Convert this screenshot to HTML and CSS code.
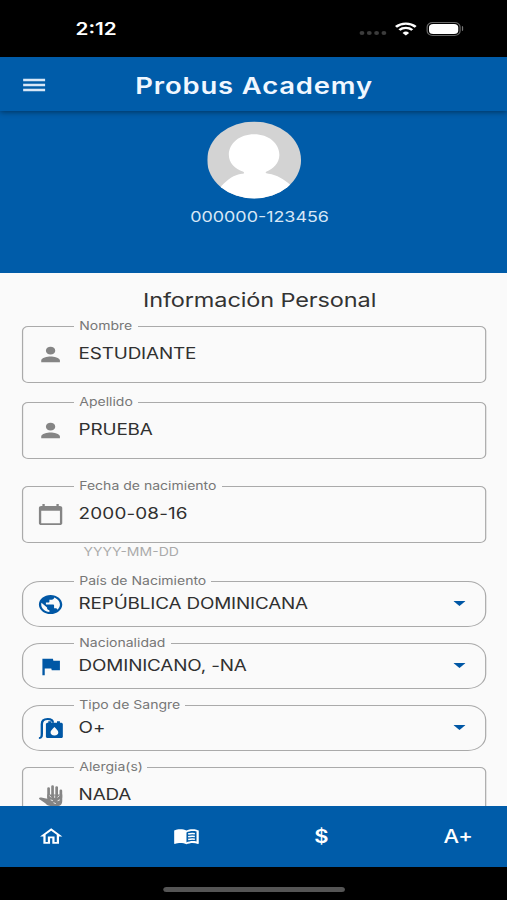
FILE: index.html
```html
<!DOCTYPE html>
<html lang="es">
<head>
<meta charset="utf-8">
<title>Probus Academy</title>
<link rel="stylesheet" href="styles.css">
</head>
<body>
<div class="screen">
  <header class="status">
    <span class="time">2:12</span>
    <span class="dots"><i></i><i></i><i></i><i></i></span>
    <svg class="wifi" viewBox="0 0 18 14"><path d="M9 13.6 6.3 10.9a3.9 3.9 0 0 1 5.4 0z" fill="#fff"/><path d="M3.7 8a7.6 7.6 0 0 1 10.6 0M.9 4.9a11.6 11.6 0 0 1 16.2 0" fill="none" stroke="#fff" stroke-width="2.3"/></svg>
    <span class="battery"><i></i></span><span class="tip"></span>
  </header>
  <div class="appbar">
    <svg class="menu" viewBox="0 0 18 12"><path d="M0-.2h18v2.500H0zM0 4.800h18v2.400H0zM0 9.700h18v2.500H0z" fill="currentColor"/></svg>
    <h1>Probus Academy</h1>
  </div>
  <section class="hero">
    <svg class="avatar" viewBox="0 0 78 78"><defs><clipPath id="round"><circle cx="39" cy="39" r="39"/></clipPath></defs><g clip-path="url(#round)"><path d="M0 0h78v78H0z" fill="#d3d3d3"/><path d="M39 13c12 0 21 9 21 21 0 8-5 14-11 17-1 1 0 2 2 2 7 1 13 6 18 11l5 15H6l6-14c5-6 10-11 17-12 2 0 2-1 1-2-7-3-12-9-12-17 0-12 9-21 21-21z" fill="#fff"/></g></svg>
    <p class="code">000000-123456</p>
  </section>
  <main>
    <h2>Información Personal</h2>
    <fieldset class="field">
      <legend>Nombre</legend>
      <div class="row"><svg class="icon" viewBox="0 0 24 24"><path d="M12 12c2.21 0 4-1.79 4-4s-1.79-4-4-4-4 1.79-4 4 1.79 4 4 4zm0 2c-2.67 0-8 1.34-8 4v2h16v-2c0-2.66-5.33-4-8-4z"/></svg><span class="value">ESTUDIANTE</span></div>
    </fieldset>
    <fieldset class="field second">
      <legend>Apellido</legend>
      <div class="row"><svg class="icon" viewBox="0 0 24 24"><path d="M12 12c2.21 0 4-1.79 4-4s-1.79-4-4-4-4 1.79-4 4 1.79 4 4 4zm0 2c-2.67 0-8 1.34-8 4v2h16v-2c0-2.66-5.33-4-8-4z"/></svg><span class="value">PRUEBA</span></div>
    </fieldset>
    <fieldset class="field date">
      <legend>Fecha de nacimiento</legend>
      <div class="row"><svg class="icon" viewBox="0 0 24 24"><path d="M20 3h-1V1h-2v2H7V1H5v2H4c-1.1 0-2 .9-2 2v16c0 1.1.9 2 2 2h16c1.1 0 2-.9 2-2V5c0-1.1-.9-2-2-2zm0 18H4V8h16v13z"/></svg><span class="value digits">2000-08-16</span></div>
    </fieldset>
    <p class="hint">YYYY-MM-DD</p>
    <fieldset class="field pill">
      <legend>País de Nacimiento</legend>
      <div class="row"><svg class="icon" viewBox="0 0 24 24"><path d="M12 2C6.48 2 2 6.48 2 12s4.48 10 10 10 10-4.48 10-10S17.52 2 12 2zm-1 17.93c-3.95-.49-7-3.85-7-7.93 0-.62.08-1.21.21-1.79L9 15v1c0 1.1.9 2 2 2v1.93zm6.9-2.54c-.26-.81-1-1.39-1.9-1.39h-1v-3c0-.55-.45-1-1-1H8v-2h2c.55 0 1-.45 1-1V7h2c1.1 0 2-.9 2-2v-.41c2.93 1.19 5 4.06 5 7.41 0 2.08-.8 3.97-2.1 5.39z"/></svg><span class="value">REPÚBLICA DOMINICANA</span><svg class="caret" viewBox="0 0 10 5"><path d="M0 0h10L5 5z"/></svg></div>
    </fieldset>
    <fieldset class="field pill">
      <legend>Nacionalidad</legend>
      <div class="row"><svg class="icon" viewBox="0 0 24 24"><path d="M14.4 6 14 4H5v17h2v-7h5.600l.4 2h7V6z"/></svg><span class="value">DOMINICANO, -NA</span><svg class="caret" viewBox="0 0 10 5"><path d="M0 0h10L5 5z"/></svg></div>
    </fieldset>
    <fieldset class="field pill">
      <legend>Tipo de Sangre</legend>
      <div class="row"><svg class="icon" viewBox="0 0 24 24"><path d="M2 22c2.500 0 2.500-2 2.500-5V7.500C4.500 4 6.500 2 9.500 2s4.500 1.500 4.500 4" fill="none" stroke="currentColor" stroke-width="2"/><path fill-rule="evenodd" d="M10 6V4.500h2.500V6h5V4.500H20V6h1.500l1 1v14l-1 1H9l-1-1V7l1-1zm5.300 4.500c-1.800 2.400-3.300 3.800-3.300 5.500a3.300 3.300 0 0 0 6.600 0c0-1.700-1.500-3.100-3.300-5.500z"/></svg><span class="value">O+</span><svg class="caret" viewBox="0 0 10 5"><path d="M0 0h10L5 5z"/></svg></div>
    </fieldset>
    <fieldset class="field last">
      <legend>Alergia(s)</legend>
      <div class="row"><svg class="icon" viewBox="0 0 24 24"><path d="M10.300 14V4.500M13.700 14V2.500M17.200 14V3.500M20.800 14V7" fill="none" stroke="currentColor" stroke-width="2.300" stroke-linecap="round"/><path d="M9.200 11H22v7c0 3-1.500 5-4 5h-5c-2.500 0-4-1-5.500-3l-5-4c-1-.9 0-2.200 1.500-1.900l5.200 1.400z"/><path d="m11 12 1.500 2m3-2v2.500m4-2.500-1.500 2m-6 2.500 2 1m4 0 2-1m-5.500 3 2 1" stroke="#fafafa" stroke-width=".8"/></svg><span class="value">NADA</span></div>
    </fieldset>
  </main>
  <nav>
    <a><svg viewBox="0 0 24 24"><path d="m12 5.690 5 4.500V18h-2v-6H9v6H7v-7.810zM12 3 2 12h3v8h6v-6h2v6h6v-8h3z"/></svg></a>
    <a><svg viewBox="0 0 24 24"><path fill-rule="evenodd" d="M21 4.500c-1.110-.35-2.330-.5-3.500-.5-1.950 0-4.050.4-5.500 1.500C10.550 4.400 8.450 4 6.500 4S2.450 4.400 1 5.500v14.150c0 .25.25.5.5.5C3.100 19.450 5.050 19 6.500 19c1.950 0 4.050.4 5.500 1.500 1.350-.85 3.800-1.500 5.500-1.500 1.650 0 3.350.3 4.750 1.050.4.050.75-.15.75-.4V5.500c-.6-.45-1.250-.75-2-1zm0 13c-1.100-.35-2.300-.5-3.500-.5-1.700 0-4.150.65-5.500 1.500V7.500C13.350 6.650 15.800 6 17.500 6c1.200 0 2.400.15 3.500.5z"/><path d="M13.500 9.300c2-.7 4-.7 6-.4M13.500 12.300c2-.7 4-.7 6-.4M13.500 15.300c2-.7 4-.7 6-.4" fill="none" stroke="currentColor" stroke-width="1.600"/></svg></a>
    <a class="dollar">$</a>
    <a class="grade">A+</a>
  </nav>
  <footer><span class="handle"></span></footer>
</div>
</body>
</html>
```
FILE: styles.css
```css
* { box-sizing: border-box; }
html { overflow: hidden; background: #000; }
body { margin: 0; width: 507px; height: 900px; overflow: hidden; font-family: Inter, "Liberation Sans", sans-serif; }
h1, h2, p { margin: 0; font-weight: 400; }
svg { display: block; fill: currentColor; flex: none; }

/* The 416px layout is widened to fill the window */
.screen { width: 416px; height: 900px; display: flex; flex-direction: column; transform: scaleX(1.21875); transform-origin: 0 0; background: #fafafa; }

.status { height: 57px; flex: none; background: #000; color: #fff; display: flex; align-items: center; padding: 0 36px 0 62px; }
.time { font-size: 17px; font-weight: 600; flex: 1; padding-top: 1px; }
.dots { display: flex; gap: 2.500px; margin: 9px 7.500px 0 0; }
.dots i { width: 3.400px; height: 4px; border-radius: 2px; background: #3c3c3c; }
.wifi { width: 18px; height: 14px; margin-right: 7.500px; }
.battery { width: 28px; height: 14px; border: 1px solid #666; border-radius: 5px; padding: 1px; }
.battery i { display: block; height: 10px; border-radius: 3.500px; background: #fff; }
.tip { width: 1.500px; height: 5px; margin-left: 1px; border-radius: 0 2px 2px 0; background: #777; }

.appbar { height: 54px; flex: none; background: #005ca9; color: #f0f7ff; display: flex; align-items: center; padding: 2px 19px 0; box-shadow: 0 1px 5px rgba(0, 0, 0, .45); z-index: 1; }
.menu { width: 18px; height: 12px; color: #d8e7f7; overflow: visible; }
h1 { flex: 1; text-align: center; font-size: 22.500px; line-height: 28px; font-weight: 600; letter-spacing: .7px; padding: 1px 17px 0 0; }

.hero { height: 162px; flex: none; background: #005ca9; display: flex; flex-direction: column; align-items: center; padding: 10px 0 0 1px; }
.avatar { width: 77px; height: 78px; }
.code { color: #d7e7f6; font-size: 14.700px; line-height: 18px; margin: 9px 0 0 9px; }

main { height: 533px; flex: none; overflow: hidden; padding: 0 17px 0 18px; }
h2 { text-align: center; color: #333; font-size: 19.300px; line-height: 24px; letter-spacing: -.1px; margin: 15px 0 7px 9px; }
.field { min-width: 0; height: 64px; margin: 0 0 12px; padding: 0 20px 0 11px; border: 1px solid #aaa; border-radius: 5px; color: #858585; }
legend { margin-left: 31px; padding: 0 4px; color: #777; font-size: 11.500px; line-height: 14px; }
.row { height: 41px; display: flex; align-items: center; }
.icon { width: 23px; height: 23px; margin-top: 1px; }
.value { flex: 1; margin-left: 11.500px; margin-top: 1px; color: #303030; font-size: 15.500px; line-height: 20px; letter-spacing: -.14px; white-space: nowrap; }
.digits { letter-spacing: .12px; }
.second { margin-bottom: 20px; }
.date { margin-bottom: 0; }
.hint { padding: 1px 0 0 50.500px; margin-bottom: 14px; font-size: 11.500px; line-height: 16px; color: #aaa; }
.pill { height: 53px; margin-bottom: 9px; border-radius: 15px; color: #0057a5; }
.pill .row { height: 31px; }
.pill .icon { margin-top: 1px; }
.pill .value { margin-top: 1px; }
.caret { width: 10px; height: 5px; margin-right: -4px; }
.last { margin-bottom: 0; }

nav { height: 61px; flex: none; background: #005ca9; color: #fff; display: flex; align-items: center; justify-content: space-between; padding: 0 20px 0 22px; }
nav a { width: 40px; display: flex; justify-content: center; }
nav svg { width: 22px; height: 23px; }
.dollar, .grade { font-size: 18px; font-weight: 500; }
.dollar { padding-right: 2px; font-weight: 600; }
footer { flex: 1; background: #000; display: flex; justify-content: center; align-items: flex-start; padding-top: 20px; }
.handle { width: 149px; height: 5px; border-radius: 3px; background: #555; }
```
